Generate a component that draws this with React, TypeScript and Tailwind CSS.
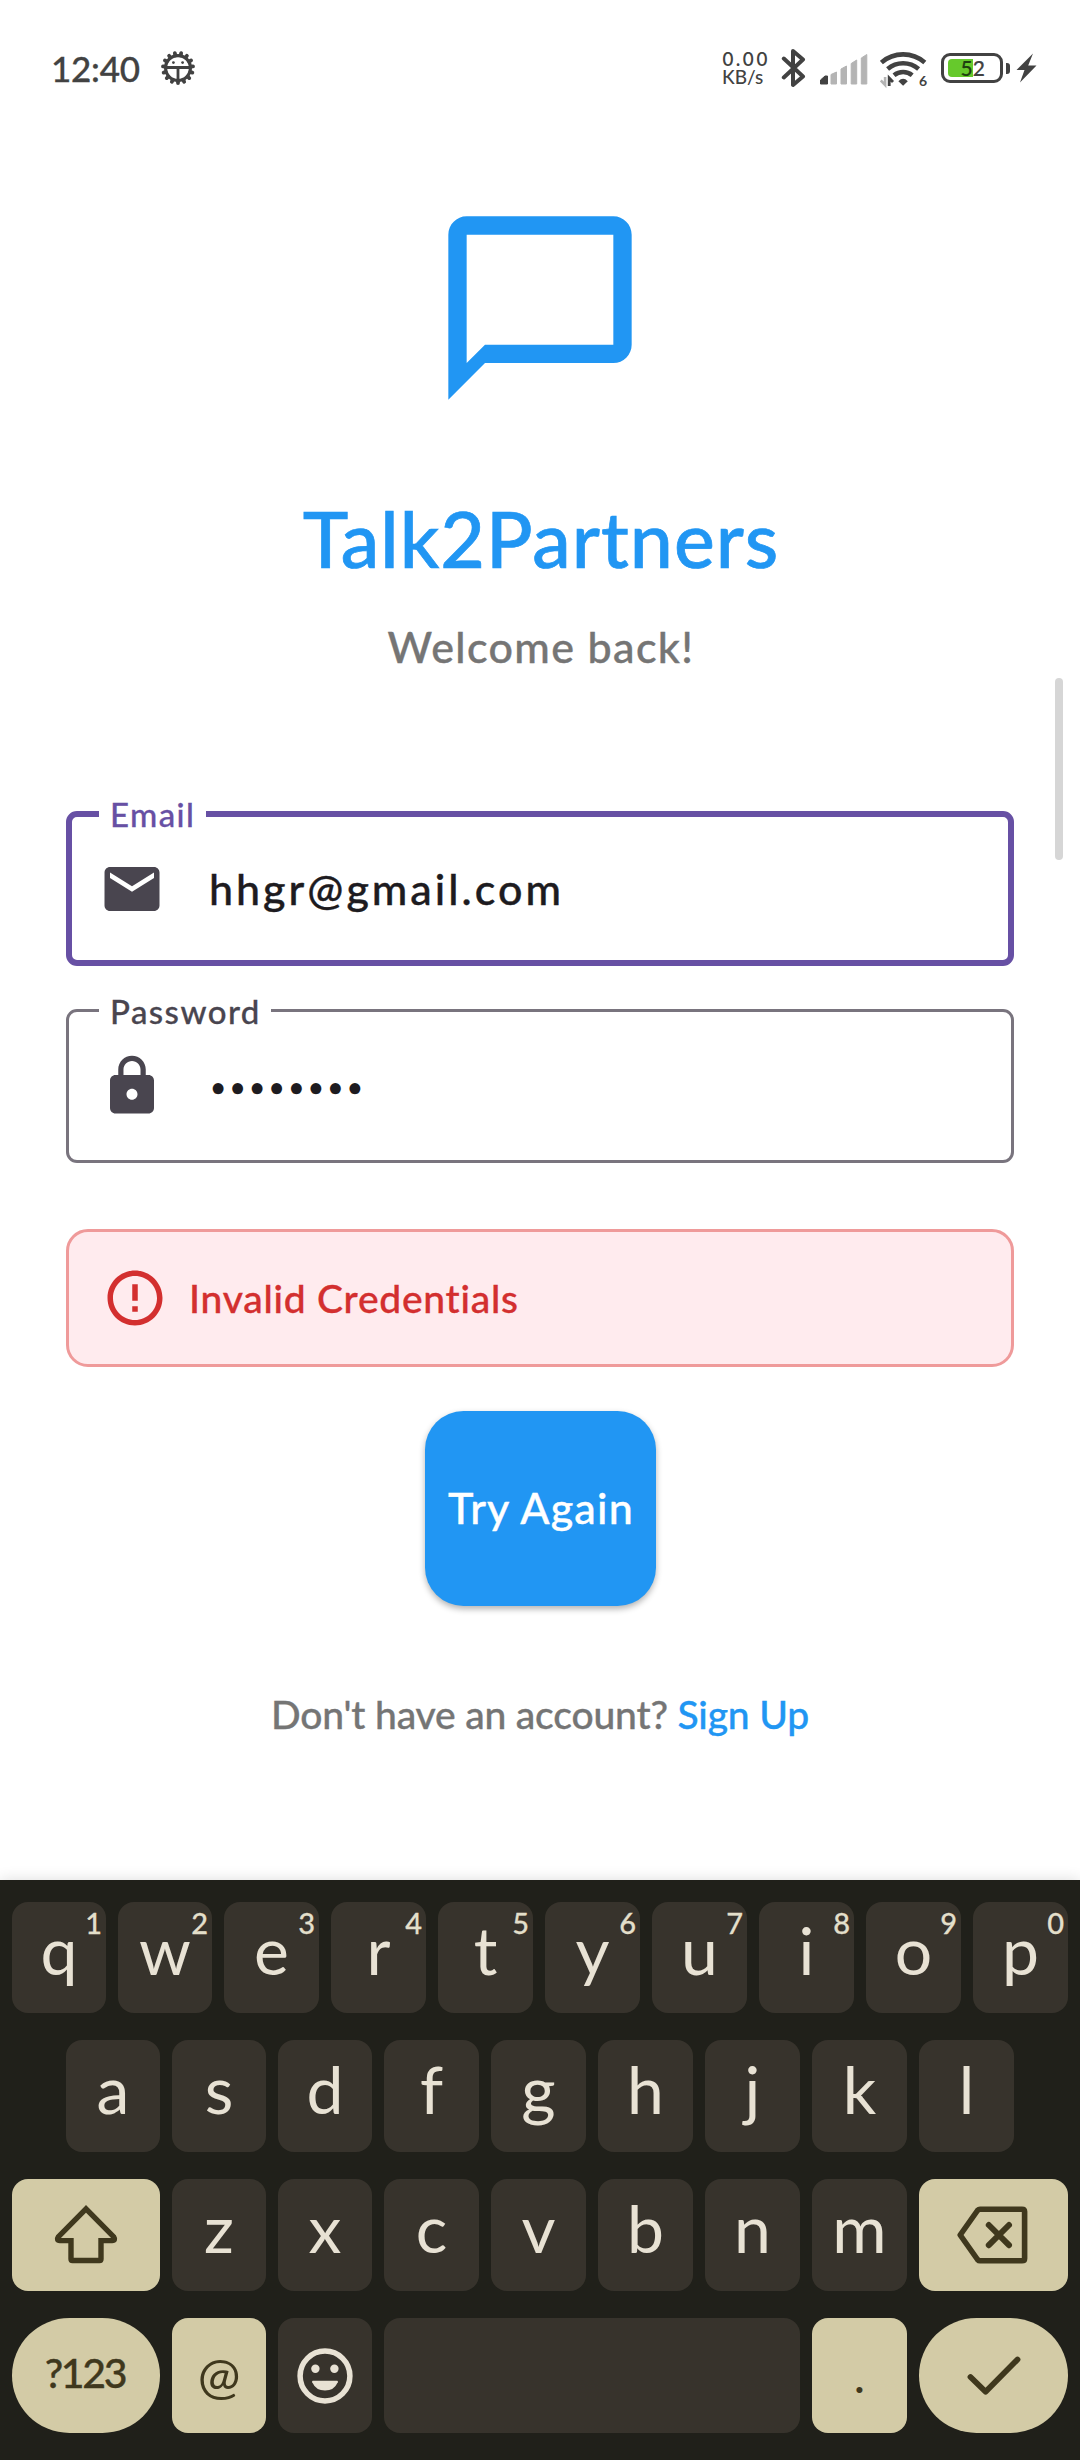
import type { ReactNode } from "react";

const LETTER_KEY = "flex shrink-0 items-center justify-center rounded-[16px] bg-[#37332c] text-[#e8e2d4]";
const ACCENT_KEY = "flex shrink-0 items-center justify-center bg-[#d3cba6] text-[#3f381d]";
const MEDIUM = "font-medium [-webkit-text-stroke:0.009em_currentColor]";

function DebugIcon() {
  const teeth = Array.from({ length: 15 }, (_, i) => (i * 360) / 15);
  return (
    <svg className="ml-[20px] h-[36px] w-[36px]" viewBox="-18 -18 36 36" fill="none" stroke="#424242">
      <circle r="12.4" strokeWidth="3.2" />
      {teeth.map((a) => (
        <path key={a} d="M0 13V15.1" strokeWidth="3.8" strokeLinecap="round" transform={`rotate(${a})`} />
      ))}
      <path d="M-12 -.5H12M0 0V12" strokeWidth="2.8" />
      <circle cx="-4.6" cy="-5.4" r="1.4" fill="#424242" stroke="none" />
      <circle cx="4.6" cy="-5.4" r="1.4" fill="#424242" stroke="none" />
    </svg>
  );
}

function StatusBar() {
  return (
    <header className="flex h-[136px] items-center justify-between pl-[51px] pr-[43px] text-[#424242]">
      <div className="flex items-center">
        <span className={`${MEDIUM} text-[35px] leading-[40px] tracking-[-0.25px]`}>12:40</span>
        <DebugIcon />
      </div>
      <div className="flex items-center">
        <div className="w-[59px] pb-[1px] text-[19px] font-medium leading-[18px]">
          <div className="font-['Inter'] text-[18.5px] tracking-[1.8px]">0.00</div>
          <div>KB/s</div>
        </div>
        <svg className="h-[42px] w-[26px]" viewBox="0 0 26 42" fill="none" stroke="#424242" strokeWidth="4" strokeLinejoin="round" strokeLinecap="round">
          <path d="M2.8 11.5L22 29.5L12 38V4L22 12.5L2.8 30.5" />
        </svg>
        <svg className="ml-[13px] h-[42px] w-[50px]" viewBox="0 0 50 42">
          <path d="M.5 37V33L5 29H7.5V37Z" fill="#424242" stroke="#424242" strokeLinejoin="round" />
          <path d="M11 37V27.5L16.5 25V37ZM21 37V22L26.5 19V37ZM31.2 37V16.5L36.7 13V37ZM41.3 37V11L46.8 7.5V37Z" fill="#b4b4b4" stroke="#b4b4b4" strokeLinejoin="round" />
        </svg>
        <div className="relative ml-[10px] h-[42px] w-[48px]">
          <svg className="h-[42px] w-[48px]" viewBox="0 0 48 42" fill="none" stroke="#424242">
            <path d="M1.4 15.5A33 33 0 0 1 44.8 15.5" strokeWidth="4.6" />
            <path d="M7.6 22A24 24 0 0 1 38.6 22" strokeWidth="4.6" />
            <path d="M14 28.2A14.5 14.5 0 0 1 32.2 28.2" strokeWidth="4.6" />
            <path d="M18.4 34.3Q23.1 29.4 27.8 34.3L23.1 38.8Z" fill="#424242" stroke="none" />
            <path d="M5.1 30V38L.8 33.5" stroke="#b4b4b4" strokeWidth="2.6" />
            <path d="M9.2 39V31L13 35" strokeWidth="2.8" />
          </svg>
          <span className="absolute bottom-[2px] right-[1px] text-[14px] font-bold leading-[13px]">6</span>
        </div>
        <div className="relative ml-[13px] flex h-[30px] w-[62px] items-center rounded-[9px] border-[3px] border-[#424242] pl-[4px]">
          <div className="h-[18px] w-[25px] rounded-l-[4px] bg-[#66c92c]" />
          <span className={`${MEDIUM} absolute left-[16.5px] top-[1px] text-[21px] leading-[22px]`}>
            <span className="text-[#1f4010]">5</span>2
          </span>
        </div>
        <div className="ml-[3px] h-[11px] w-[4px] rounded-r-[3px] bg-[#424242]" />
        <svg className="ml-[6px] h-[30px] w-[21px]" viewBox="0 0 21 30">
          <path d="M17 .5L.5 17H8.5L4 29.5L20.5 12.5H12.2Z" fill="#424242" />
        </svg>
      </div>
    </header>
  );
}

function Field({ label, active, icon, children }: { label: string; active?: boolean; icon: string; children: ReactNode }) {
  return (
    <div
      className={
        active
          ? "relative h-[155px] rounded-[11px] border-[6px] border-[#6750a4]"
          : "relative h-[154px] rounded-[11px] border-[3px] border-[#79747e]"
      }
    >
      <label
        className={
          active
            ? `${MEDIUM} absolute left-[27px] top-[-23px] bg-white pl-[11px] pr-[11px] text-[33px] leading-[40px] tracking-[1.4px] text-[#6750a4]`
            : `${MEDIUM} absolute left-[30px] top-[-21px] bg-white pl-[11px] pr-[10px] text-[33px] leading-[40px] tracking-[1.45px] text-[#49454f]`
        }
      >
        {label}
      </label>
      <div className={active ? "flex h-full items-center pl-[27px]" : "flex h-full items-center pl-[30px]"}>
        <svg className="h-[66px] w-[66px]" viewBox="0 0 24 24" fill="#49454f">
          <path d={icon} />
        </svg>
        {children}
      </div>
    </div>
  );
}

const MAIL =
  "M20 4H4c-1.1 0-1.99.9-1.99 2L2 18c0 1.1.9 2 2 2h16c1.1 0 2-.9 2-2V6c0-1.1-.9-2-2-2zm0 4l-8 5-8-5V6l8 5 8-5v2z";
const LOCK =
  "M18 8h-1V6c0-2.76-2.24-5-5-5S7 3.24 7 6v2H6c-1.1 0-2 .9-2 2v10c0 1.1.9 2 2 2h12c1.1 0 2-.9 2-2V10c0-1.1-.9-2-2-2zm-6 9c-1.1 0-2-.9-2-2s.9-2 2-2 2 .9 2 2-.9 2-2 2zm3.1-9H8.9V6c0-1.71 1.39-3.1 3.1-3.1 1.71 0 3.1 1.39 3.1 3.1v2z";

function LetterKey({ letter, hint, narrow }: { letter: string; hint?: string; narrow?: boolean }) {
  return (
    <div className={`${LETTER_KEY} relative pb-[15px] text-[66px] leading-[66px] ${narrow ? "w-[94px]" : "w-[95px]"}`}>
      {letter}
      {hint && (
        <span className={`${MEDIUM} absolute right-[4px] top-[6px] text-[29px] leading-[30px] text-[#e3dfca]`}>{hint}</span>
      )}
    </div>
  );
}

function Keyboard() {
  return (
    <div className="flex h-[580px] flex-col bg-[#20201a] px-[12px] pt-[22px] shadow-[0_0_14px_rgba(0,0,0,0.14)]">
      <div className="flex h-[111px] gap-[12px]">
        {"qwertyuiop".split("").map((c, i) => (
          <LetterKey key={c} letter={c} hint={String((i + 1) % 10)} narrow={i < 2} />
        ))}
      </div>
      <div className="mt-[27px] flex h-[112px] gap-[12px] px-[54px]">
        {"asdfghjkl".split("").map((c, i) => (
          <LetterKey key={c} letter={c} narrow={i < 3} />
        ))}
      </div>
      <div className="mt-[27px] flex h-[112px] gap-[12px]">
        <div className={`${ACCENT_KEY} w-[148px] rounded-[16px] pr-[1px]`}>
          <svg className="h-[66px] w-[66px]" viewBox="0 0 66 66" fill="none" stroke="currentColor" strokeWidth="5.4">
            <path d="M33 6.8L5.5 34.6Q3 38.4 7 38.6H18V57Q18 58.5 19.5 58.5H46.5Q48 58.5 48 57V38.6H59Q63 38.4 60.5 34.6Z" />
          </svg>
        </div>
        {"zxcvbnm".split("").map((c, i) => (
          <LetterKey key={c} letter={c} narrow={i < 2} />
        ))}
        <div className={`${ACCENT_KEY} w-[149px] rounded-[16px]`}>
          <svg className="h-[66px] w-[76px]" viewBox="0 0 76 66" fill="none" stroke="currentColor" strokeWidth="5.6" strokeLinejoin="round" strokeLinecap="round">
            <path d="M4.2 33L21.5 8.5Q22.7 7.2 24 7.2H66Q68.6 7.2 68.6 9.6V56.4Q68.6 58.8 66 58.8H24Q22.7 58.8 21.5 57.5Z" />
            <path d="M32.8 23L53 43.2M53 23L32.8 43.2" strokeWidth="6" />
          </svg>
        </div>
      </div>
      <div className="mt-[27px] flex h-[115px] gap-[12px]">
        <div className={`${ACCENT_KEY} ${MEDIUM} w-[148px] rounded-[57.5px] pb-[5px] pr-[2px] text-[41px] tracking-[-2.3px]`}>?123</div>
        <div className={`${ACCENT_KEY} w-[94px] rounded-[16px] pb-[3px] text-[51px] leading-[51px]`}>@</div>
        <div className={`${LETTER_KEY} w-[94px]`}>
          <svg className="h-[66px] w-[66px]" viewBox="0 0 66 66" fill="currentColor">
            <circle cx="33" cy="33" r="24.9" fill="none" stroke="currentColor" strokeWidth="5.5" />
            <circle cx="23.4" cy="25.7" r="4.2" />
            <circle cx="42.4" cy="25.7" r="4.2" />
            <path d="M21 37.8H45Q46.4 37.8 45.8 39.2Q42 47.6 33 47.6Q24 47.6 20.2 39.2Q19.6 37.8 21 37.8Z" />
          </svg>
        </div>
        <div className="flex-1 rounded-[16px] bg-[#37332c]" />
        <div className={`${ACCENT_KEY} w-[95px] rounded-[16px] pb-[2px] text-[48px] leading-[48px]`}>.</div>
        <div className={`${ACCENT_KEY} w-[149px] rounded-[57.5px]`}>
          <svg className="h-[66px] w-[66px]" viewBox="0 0 66 66" fill="none" stroke="currentColor" strokeWidth="5.8" strokeLinejoin="round" strokeLinecap="round">
            <path d="M9.5 34L24.6 48.8L56.5 16.5" />
          </svg>
        </div>
      </div>
    </div>
  );
}

export default function App() {
  return (
    <div className="relative flex h-[2460px] w-[1080px] flex-col overflow-hidden bg-white font-['Lato',sans-serif]">
      <StatusBar />
      <div className="absolute left-[1055px] top-[678px] h-[182px] w-[8px] rounded-full bg-[#d6d6d6]" />
      <main className="flex h-[1744px] flex-col items-center px-[66px] pt-[62px]">
        <svg className="h-[220px] w-[220px]" viewBox="0 0 24 24" fill="#2196f3">
          <path d="M20 2H4c-1.1 0-2 .9-2 2v18l4-4h14c1.1 0 2-.9 2-2V4c0-1.1-.9-2-2-2zm0 14H6l-2 2V4h16v12z" />
        </svg>
        <h1 className={`${MEDIUM} mt-[72px] pl-[2px] text-[77px] leading-[96px] tracking-[1px] text-[#2196f3]`}>Talk2Partners</h1>
        <p className={`${MEDIUM} mt-[31px] pl-[2px] text-[43px] leading-[60px] tracking-[1.36px] text-[#757575]`}>Welcome back!</p>
        <div className="mt-[134px] flex w-full flex-col gap-[43px]">
          <Field label="Email" active icon={MAIL}>
            <span className={`${MEDIUM} ml-[44px] text-[43px] leading-[60px] tracking-[3px] text-[#1d1b20]`}>hhgr@gmail.com</span>
          </Field>
          <Field label="Password" icon={LOCK}>
            <span className="ml-[45px] mt-[2px] text-[28px] font-medium leading-[60px] tracking-[3.3px] text-[#1d1b20]">••••••••</span>
          </Field>
        </div>
        <div className="mt-[66px] flex h-[138px] w-full items-center rounded-[22px] border-[3px] border-[#ef9a9a] bg-[#ffebee] pl-[33px]">
          <svg className="h-[66px] w-[66px]" viewBox="0 0 24 24" fill="#d32f2f">
            <path d="M11 15h2v2h-2zm0-8h2v6h-2zm.99-5C6.47 2 2 6.48 2 12s4.47 10 9.99 10C17.52 22 22 17.52 22 12S17.52 2 11.99 2zM12 20c-4.42 0-8-3.58-8-8s3.58-8 8-8 8 3.58 8 8-3.58 8-8 8z" />
          </svg>
          <span className={`${MEDIUM} ml-[21px] text-[39px] leading-[50px] tracking-[0.74px] text-[#d32f2f]`}>Invalid Credentials</span>
        </div>
        <button
          className={`${MEDIUM} mt-[43.5px] h-[195.5px] w-[231px] whitespace-nowrap rounded-[38.5px] bg-[#2196f3] pl-[2px] text-[43px] leading-[50px] tracking-[1.2px] text-white shadow-[0_3px_6px_rgba(0,0,0,0.3)]`}
        >
          Try Again
        </button>
        <p className={`${MEDIUM} mt-[83px] text-[39px] leading-[50px] tracking-[-0.17px] text-[#757575]`}>
          Don't have an account? <span className="text-[#2196f3]">Sign Up</span>
        </p>
      </main>
      <Keyboard />
    </div>
  );
}
